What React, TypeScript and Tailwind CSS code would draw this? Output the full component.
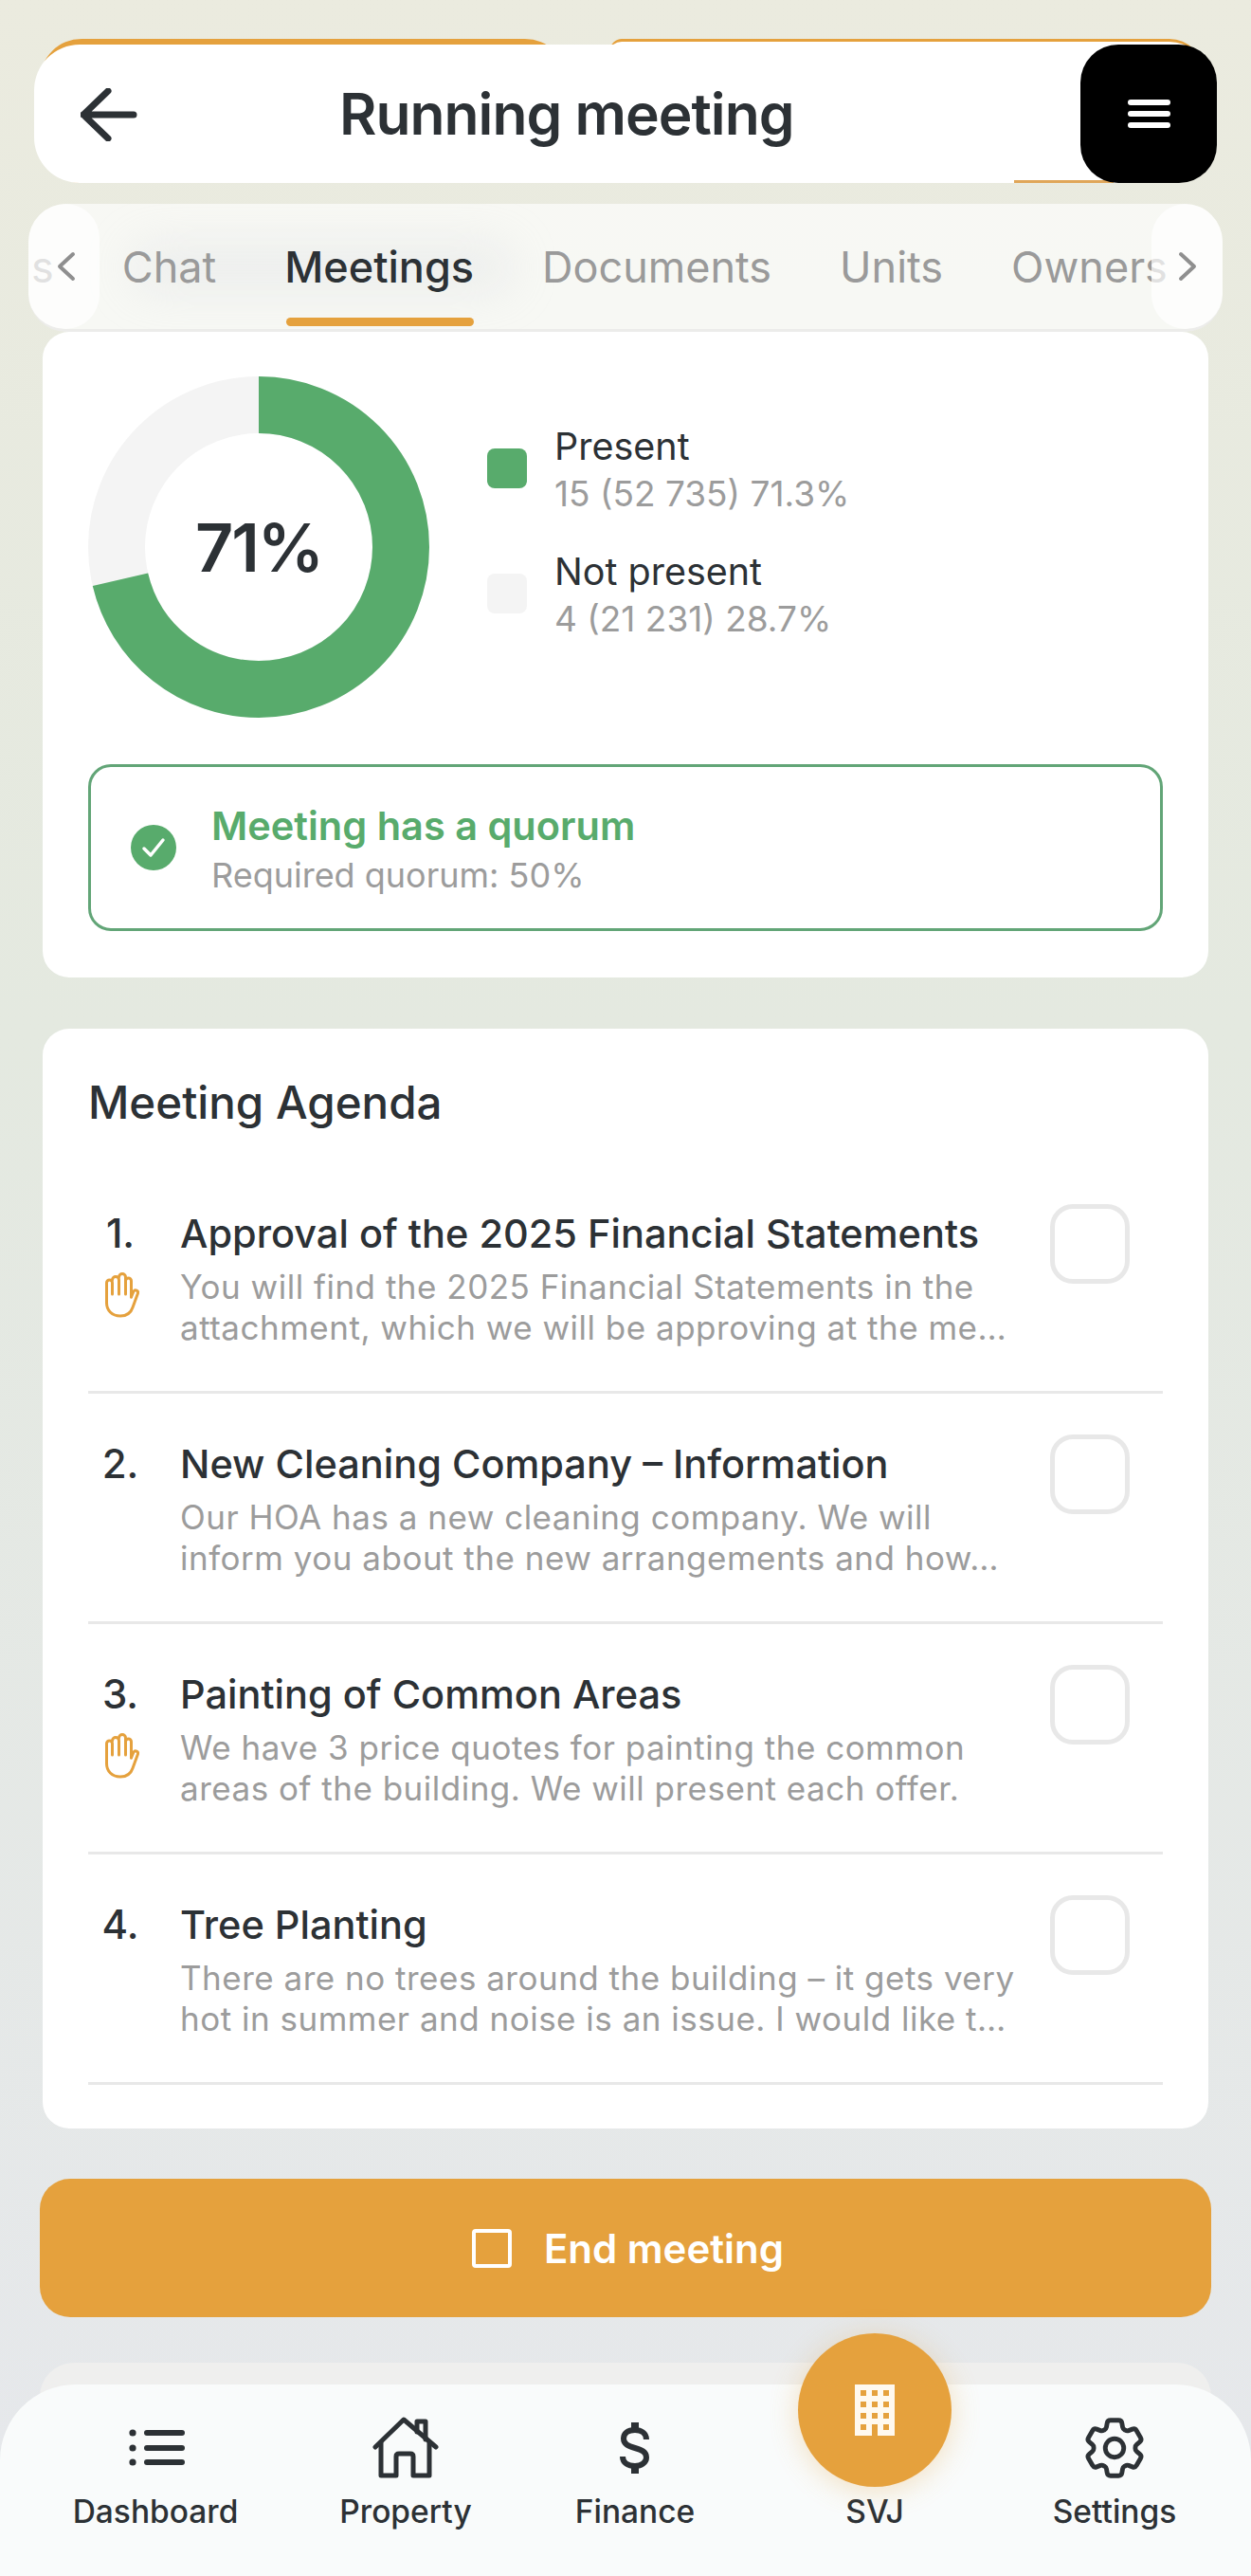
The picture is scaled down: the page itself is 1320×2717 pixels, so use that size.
import React from 'react';
import { HiOutlineCog6Tooth } from 'react-icons/hi2';

const agenda = [
  {
    title: 'Approval of the 2025 Financial Statements',
    lines: ['You will find the 2025 Financial Statements in the', 'attachment, which we will be approving at the me…'],
    hand: true,
  },
  {
    title: 'New Cleaning Company – Information',
    lines: ['Our HOA has a new cleaning company. We will', 'inform you about the new arrangements and how…'],
    hand: false,
  },
  {
    title: 'Painting of Common Areas',
    lines: ['We have 3 price quotes for painting the common', 'areas of the building. We will present each offer.'],
    hand: true,
  },
  {
    title: 'Tree Planting',
    lines: ['There are no trees around the building – it gets very', 'hot in summer and noise is an issue. I would like t…'],
    hand: false,
  },
];

function Donut() {
  return (
    <div className="relative h-[360px] w-[360px] shrink-0">
      <svg width="360" height="360" viewBox="0 0 360 360">
        <circle cx="180" cy="180" r="150" fill="none" stroke="#f4f4f4" strokeWidth="60" />
        <circle
          cx="180"
          cy="180"
          r="150"
          fill="none"
          stroke="#58ab6c"
          strokeWidth="60"
          strokeDasharray="672 943"
          transform="rotate(-90 180 180)"
        />
      </svg>
      <div className="absolute inset-0 flex items-center justify-center text-[70px] font-semibold tracking-[-2px] text-[#2c3135]">
        71%
      </div>
    </div>
  );
}

function LegendRow({ color, label, value }: { color: string; label: string; value: string }) {
  return (
    <div className="flex items-center">
      <div className={`mb-[4px] h-[42px] w-[42px] rounded-[8px] ${color}`} />
      <div className="ml-[29px]">
        <div className="text-[39.5px] leading-[50px] text-[#2c3135]">{label}</div>
        <div className="text-[37px] leading-[50px] text-[#9c9c9c]">{value}</div>
      </div>
    </div>
  );
}

function HandIcon() {
  return (
    <svg className="ml-[4px] mt-[15px]" width="40" height="48" viewBox="0 0 40 48" fill="none" stroke="#e5a13d" strokeWidth="3" strokeLinecap="round" strokeLinejoin="round">
      <path d="M3.5 32 V11 a3 3 0 0 1 6 0 V23" />
      <path d="M9.5 8 a3.5 3.5 0 0 1 7 0 V23" />
      <path d="M16.5 5 a3.5 3.5 0 0 1 7 0 V23" />
      <path d="M23.5 9 a3 3 0 0 1 6 0 V26" />
      <path d="M29.5 26 L32 20 a2.5 2.5 0 0 1 4.5 2 L31 37 C29 43 24 46 18 46 C9 46 3.5 40 3.5 32" />
    </svg>
  );
}

function HomeIcon() {
  return (
    <svg width="70" height="66" viewBox="0 0 70 66" fill="none" stroke="#2c3135" strokeWidth="5" strokeLinecap="round" strokeLinejoin="round">
      <path d="M3 32 L33 3 L67 32" />
      <path d="M47 16 V5 H56 V24" />
      <path d="M9 27 V62 H25 V42 Q25 39 28 39 H40 Q43 39 43 42 V62 H60 V27" />
    </svg>
  );
}

function DollarIcon() {
  return (
    <svg width="32" height="56" viewBox="0 0 32 56" fill="none" stroke="#2c3135" strokeWidth="6">
      <path d="M16 1 V10 M16 46 V55" strokeWidth="8" />
      <path d="M28 19 C28 12 22 9 16 9 C8 9 4 13 4 18 C4 24 9 26 16 28 C23 30 28 32 28 38 C28 43 23 47 16 47 C9 47 3 44 3 37" />
    </svg>
  );
}

function ListIcon() {
  return (
    <svg className="ml-[2px]" width="60" height="40" viewBox="0 0 60 40" fill="#2c3135">
      <circle cx="5" cy="4" r="3.6" />
      <circle cx="5" cy="20" r="3.6" />
      <circle cx="5" cy="35" r="3.6" />
      <rect x="17" y="1" width="43" height="6" rx="3" />
      <rect x="17" y="17" width="43" height="6" rx="3" />
      <rect x="17" y="32" width="43" height="6" rx="3" />
    </svg>
  );
}

function BuildingIcon() {
  return (
    <svg width="42" height="54" viewBox="0 0 42 54">
      <path
        fillRule="evenodd"
        fill="#fff9ef"
        d="M0 0H42V54H24V42H18V54H0Z M6 6V12H12V6Z M18 6V12H24V6Z M30 6V12H36V6Z M6 18V24H12V18Z M18 18V24H24V18Z M30 18V24H36V18Z M6 30V36H12V30Z M18 30V36H24V30Z M30 30V36H36V30Z M6 42V48H12V42Z M30 42V48H36V42Z"
      />
    </svg>
  );
}

export default function App() {
  return (
    <div className="relative h-[2717px] w-[1320px] overflow-hidden bg-linear-to-b from-[#ebebdf] via-[#e4e9e0] via-40% to-[#e6e8ec] pt-[47px] font-[Inter,sans-serif]">
      {/* Header, with the orange page title cards peeking out behind it */}
      <div className="relative mx-[36px] flex h-[146px] items-center">
        <div className="absolute -top-[6px] bottom-0 left-[6px] w-[556px] rounded-[44px] bg-[#e5a13d]" />
        <div className="absolute -top-[6px] left-[608px] h-[60px] w-[626px] rounded-tl-[12px] rounded-tr-[36px] border-t-[3px] border-[#e5a13d] bg-white" />
        <div className="absolute inset-0 rounded-[48px] bg-white" />
        <div className="absolute bottom-0 left-[1034px] h-[3px] w-[105px] bg-[#e0a659]" />
        <svg className="absolute left-[49px] top-[46px]" width="60" height="56" viewBox="0 0 60 56" fill="none" stroke="#2c3135" strokeWidth="7" strokeLinecap="round" strokeLinejoin="round">
          <path d="M29 3 L3 28 L29 53 M3 28 H56" />
        </svg>
        <div className="relative ml-[322px] text-[60.5px] font-semibold leading-[70px] tracking-[-1px] text-[#2c3135]">
          Running meeting
        </div>
        <div className="absolute bottom-0 right-0 top-0 flex w-[144px] flex-col items-center justify-center gap-[6px] rounded-[40px] bg-black">
          <div className="h-[6px] w-[45px] rounded-full bg-white" />
          <div className="h-[6px] w-[45px] rounded-full bg-white" />
          <div className="h-[6px] w-[45px] rounded-full bg-white" />
        </div>
      </div>

      {/* Tabs */}
      <div className="relative mx-[30px] mt-[22px] h-[135px] overflow-hidden rounded-[40px] border-b-[3px] border-[#ececea] bg-white/65">
        <div className="absolute left-[110px] top-[44px] h-[46px] w-[400px] rounded-full bg-gray-300/30 blur-xl" />
        <div className="relative flex h-full items-center gap-[72px] whitespace-nowrap pl-[3px] pt-[2px] text-[45px] text-[#9a9a9a]">
          <span>s</span>
          <span>Chat</span>
          <span className="font-medium text-[#2c3135]">Meetings</span>
          <span>Documents</span>
          <span>Units</span>
          <span>Owners</span>
        </div>
        <div className="absolute bottom-[3px] left-[272px] h-[9px] w-[198px] rounded-full bg-[#e5a13d]" />
        <div className="absolute bottom-0 left-0 top-0 flex w-[75px] items-center justify-end rounded-[36px] bg-white/70 pr-[25px]">
          <svg width="20" height="32" viewBox="0 0 20 32" fill="none" stroke="#8f8f8f" strokeWidth="4" strokeLinecap="round" strokeLinejoin="round">
            <path d="M17 3 L3 16 L17 29" />
          </svg>
        </div>
        <div className="absolute bottom-0 right-0 top-0 flex w-[75px] items-center rounded-[36px] bg-white/70 pl-[28px]">
          <svg width="20" height="32" viewBox="0 0 20 32" fill="none" stroke="#8f8f8f" strokeWidth="4" strokeLinecap="round" strokeLinejoin="round">
            <path d="M3 3 L17 16 L3 29" />
          </svg>
        </div>
      </div>

      {/* Attendance */}
      <div className="mx-[45px] rounded-[28px] bg-white px-[48px] pb-[49px] pt-[47px]">
        <div className="flex">
          <Donut />
          <div className="ml-[61px] mt-[49px] flex flex-col gap-[32px]">
            <LegendRow color="bg-[#58ab6c]" label="Present" value="15 (52 735) 71.3%" />
            <LegendRow color="bg-[#f4f4f4]" label="Not present" value="4 (21 231) 28.7%" />
          </div>
        </div>
        <div className="mt-[49px] flex h-[176px] items-center rounded-[24px] border-[3px] border-[#62a577] pl-[42px]">
          <div className="flex h-[48px] w-[48px] items-center justify-center rounded-full bg-[#58ab6c]">
            <svg width="28" height="24" viewBox="0 0 28 24" fill="none" stroke="#fff" strokeWidth="3.5" strokeLinecap="round" strokeLinejoin="round">
              <path d="M4 13 L11 20 L24 4" />
            </svg>
          </div>
          <div className="ml-[37px] pt-[5px]">
            <div className="text-[41.5px] font-semibold leading-[52px] text-[#58ab6c]">Meeting has a quorum</div>
            <div className="text-[36px] leading-[52px] text-[#9c9c9c]">Required quorum: 50%</div>
          </div>
        </div>
      </div>

      {/* Agenda */}
      <div className="mx-[45px] mt-[54px] h-[1160px] rounded-[28px] bg-white px-[48px] pt-[52px]">
        <div className="pb-[38px] text-[47.5px] font-medium leading-[52px] text-[#2c3135]">Meeting Agenda</div>
        {agenda.map((item, i) => (
          <div key={item.title} className="flex h-[243px] border-b-[3px] border-[#e8e8e8] pt-[48px]">
            <div className="flex w-[68px] flex-col items-center">
              <div className="text-[42px] font-medium leading-[52px] text-[#2c3135]">{i + 1}.</div>
              {item.hand && <HandIcon />}
            </div>
            <div className="ml-[29px] flex-1 whitespace-nowrap">
              <div className="text-[41.5px] font-medium leading-[52px] text-[#2c3135]">{item.title}</div>
              <div className="mt-[9px] text-[35px] leading-[43px] tracking-[0.5px] text-[#9c9c9c]">
                {item.lines.map((line) => (
                  <div key={line}>{line}</div>
                ))}
              </div>
            </div>
            <div className="mr-[35px] mt-[-5px] h-[84px] w-[84px] rounded-[24px] border-[5px] border-[#e8e8e8]" />
          </div>
        ))}
      </div>

      <div className="mx-[42px] mt-[53px] flex h-[146px] items-center justify-center gap-[34px] rounded-[32px] bg-[#e5a13d] pl-[5px]">
        <div className="h-[41px] w-[42px] rounded-[4px] border-[4px] border-white" />
        <div className="text-[42px] font-semibold text-white">End meeting</div>
      </div>

      <div className="mx-[42px] mt-[48px] h-[100px] rounded-[36px] bg-[#efefee]" />

      {/* Bottom nav lies over the scrolled content */}
      <div className="absolute bottom-0 left-0 right-0 h-[202px] rounded-t-[80px] bg-[#f9fbfb]">
        <div className="grid grid-cols-[328px_200px_286px_218px_288px] pt-[32px] text-[33.5px] font-medium text-[#2c3135]">
          <div className="flex flex-col items-center">
            <div className="flex h-[70px] items-center">
              <ListIcon />
            </div>
            <div className="mt-[10px] leading-[44px]">Dashboard</div>
          </div>
          <div className="flex flex-col items-center">
            <div className="flex h-[70px] items-center">
              <HomeIcon />
            </div>
            <div className="mt-[10px] leading-[44px]">Property</div>
          </div>
          <div className="flex flex-col items-center pr-[2px]">
            <div className="flex h-[70px] items-center">
              <DollarIcon />
            </div>
            <div className="mt-[10px] leading-[44px]">Finance</div>
          </div>
          <div className="relative flex flex-col items-center">
            <div className="absolute -top-[86px] flex h-[162px] w-[162px] items-center justify-center rounded-full bg-[#e5a13d] shadow-[0_4px_30px_rgba(229,161,61,0.3)]">
              <BuildingIcon />
            </div>
            <div className="mt-[80px] leading-[44px]">SVJ</div>
          </div>
          <div className="flex flex-col items-center">
            <div className="flex h-[70px] items-center">
              <HiOutlineCog6Tooth size={78} />
            </div>
            <div className="mt-[10px] leading-[44px]">Settings</div>
          </div>
        </div>
      </div>
    </div>
  );
}
